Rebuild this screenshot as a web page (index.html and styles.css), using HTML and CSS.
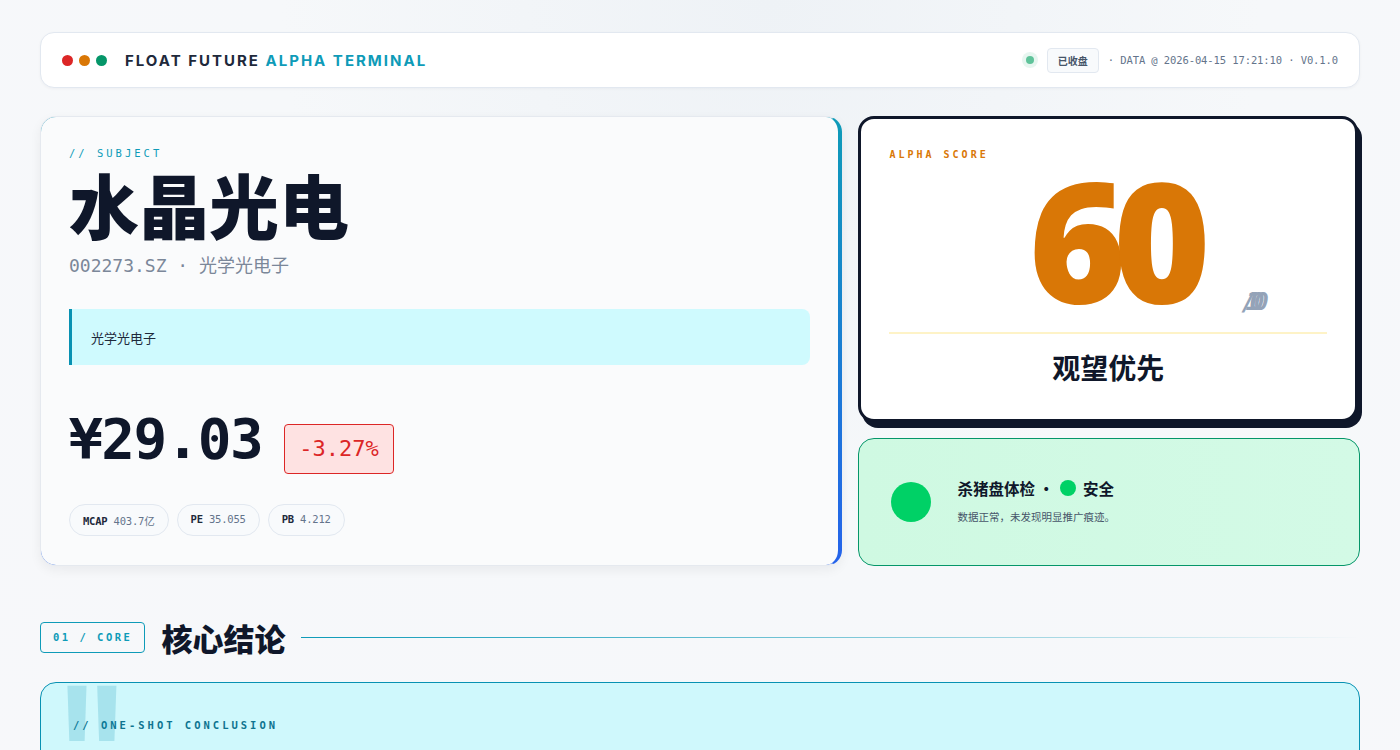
FILE: index.html
```html
<!DOCTYPE html>
<html lang="zh-CN">
<head>
  <meta charset="UTF-8">
  <meta name="viewport" content="width=device-width, initial-scale=1.0">
  <title>Float Future Alpha Terminal</title>
  <link rel="stylesheet" href="styles.css">
</head>
<body>
  <div class="page">
    <!-- Top bar -->
    <header class="topbar">
      <div class="brand">
        <span class="dot red"></span>
        <span class="dot amber"></span>
        <span class="dot green"></span>
        <span class="brand-name">FLOAT FUTURE <em>ALPHA TERMINAL</em></span>
      </div>
      <div class="status">
        <span class="live-dot"></span>
        <span class="market-tag">已收盘</span>
        <span class="meta">· DATA @ 2026-04-15 17:21:10 · V0.1.0</span>
      </div>
    </header>

    <!-- Hero -->
    <section class="hero">
      <div class="subject-card">
        <div class="eyebrow">// SUBJECT</div>
        <h1 class="stock-name">水晶光电</h1>
        <div class="stock-code">002273.SZ · 光学光电子</div>
        <div class="industry-note">光学光电子</div>
        <div class="price-row">
          <span class="price">¥29.03</span>
          <span class="change down">-3.27%</span>
        </div>
        <div class="pills">
          <span class="pill"><b>MCAP</b> 403.7亿</span>
          <span class="pill"><b>PE</b> 35.055</span>
          <span class="pill"><b>PB</b> 4.212</span>
        </div>
      </div>

      <div class="side">
        <div class="score-card">
          <div class="score-label">ALPHA SCORE</div>
          <div class="score-wrap">
            <span class="score">60<span class="score-max">/100</span></span>
          </div>
          <div class="score-verdict">观望优先</div>
        </div>

        <div class="safety-card">
          <span class="safety-light"></span>
          <div class="safety-text">
            <div class="safety-title">杀猪盘体检 ·<span class="mini-light"></span>安全</div>
            <div class="safety-desc">数据正常，未发现明显推广痕迹。</div>
          </div>
        </div>
      </div>
    </section>

    <!-- Section: core -->
    <div class="section-head">
      <span class="section-tag">01 / CORE</span>
      <h2>核心结论</h2>
      <span class="section-line"></span>
    </div>

    <div class="conclusion-card">
      <span class="quote-mark">"</span>
      <div class="eyebrow dark">// ONE-SHOT CONCLUSION</div>
    </div>
  </div>
</body>
</html>
```

FILE: styles.css
```css
/* Reset */
* {
  margin: 0;
  padding: 0;
  box-sizing: border-box;
}

body {
  font-family: Inter, "Noto Sans CJK SC", sans-serif;
  background: radial-gradient(ellipse at 55% 0%, #eef2f6 0%, #f6f8fa 45%, #f7f8fa 100%);
  color: #0f172a;
  min-height: 100vh;
}

.page {
  padding: 32px 40px;
}

/* Top bar */
.topbar {
  display: flex;
  justify-content: space-between;
  align-items: center;
  height: 56px;
  padding: 0 21px;
  background: #fff;
  border: 1px solid #e2e8f0;
  border-radius: 14px;
  box-shadow: 0 1px 3px rgba(15, 23, 42, 0.04);
}

.brand {
  display: flex;
  align-items: center;
  gap: 6px;
}

.dot {
  width: 11px;
  height: 11px;
  border-radius: 50%;
}

.dot.red { background: #dc2626; }
.dot.amber { background: #d97706; }
.dot.green { background: #059669; }

.brand-name {
  margin-left: 12px;
  font-size: 15px;
  font-weight: 700;
  letter-spacing: 2px;
  color: #1e293b;
}

.brand-name em {
  font-style: normal;
  color: #0e9bb8;
}

.status {
  display: flex;
  align-items: center;
  gap: 9px;
  font-family: "DejaVu Sans Mono", "Noto Sans CJK SC", monospace;
}

.live-dot {
  width: 8px;
  height: 8px;
  border-radius: 50%;
  background: #5fc39a;
  box-shadow: 0 0 0 4px rgba(95, 195, 154, 0.15);
  margin-right: 4px;
}

.market-tag {
  font-family: "Noto Sans CJK SC", sans-serif;
  font-size: 10px;
  font-weight: 700;
  color: #475569;
  background: #f8fafc;
  border: 1px solid #e2e8f0;
  border-radius: 4px;
  padding: 4px 10px;
}

.meta {
  font-size: 10.5px;
  color: #64748b;
  letter-spacing: -0.1px;
}

/* Hero grid */
.hero {
  display: grid;
  grid-template-columns: 1.6fr 1fr;
  gap: 16px;
  margin-top: 28px;
}

.subject-card {
  border: 1px solid #e5e9ef;
  border-right: 4px solid transparent;
  border-radius: 16px;
  padding: 30px 28px 29px 28px;
  box-shadow: 0 4px 12px rgba(15, 23, 42, 0.06);
  background-image: linear-gradient(#fafbfc, #fafbfc), linear-gradient(180deg, #0e9bb8, #2563eb);
  background-origin: border-box;
  background-clip: padding-box, border-box;
}

.eyebrow {
  font-family: "DejaVu Sans Mono", monospace;
  font-size: 10.5px;
  letter-spacing: 3px;
  color: #0e9bb8;
}

.eyebrow.dark {
  color: #0e7490;
  font-weight: 700;
}

.stock-name {
  font-family: "Noto Sans CJK SC", sans-serif;
  font-size: 70px;
  font-weight: 900;
  line-height: 1;
  margin-top: 10px;
  color: #0f172a;
}

.stock-code {
  font-family: "DejaVu Sans Mono", "Noto Sans CJK SC", monospace;
  font-size: 18px;
  color: #7b8799;
  margin-top: 12px;
}

.industry-note {
  font-family: "Noto Sans CJK SC", sans-serif;
  margin-top: 32px;
  height: 56px;
  display: flex;
  align-items: center;
  padding-left: 19px;
  font-size: 13px;
  color: #1e293b;
  background: #cffafe;
  border-left: 3px solid #0891b2;
  border-radius: 0 8px 8px 0;
}

.price-row {
  display: flex;
  align-items: center;
  gap: 22px;
  margin-top: 39px;
}

.price {
  font-family: "DejaVu Sans Mono", monospace;
  font-size: 56px;
  font-weight: 700;
  letter-spacing: -1.5px;
  color: #0f172a;
  line-height: 1;
}

.change {
  font-family: "DejaVu Sans Mono", monospace;
  font-size: 22px;
  line-height: 1;
  padding: 13px 14px;
  border-radius: 4px;
  margin-top: 20px;
}

.change.down {
  color: #dc2626;
  background: #fee2e2;
  border: 1px solid #dc2626;
}

.pills {
  display: flex;
  gap: 8px;
  margin-top: 30px;
}

.pill {
  font-family: "DejaVu Sans Mono", "Noto Sans CJK SC", monospace;
  font-size: 10.5px;
  letter-spacing: -0.2px;
  color: #64748b;
  background: #f8fafc;
  border: 1px solid #e2e8f0;
  border-radius: 16px;
  padding: 8px 13px 7px;
}

.pill b {
  color: #1e293b;
}

/* Right column */
.side {
  display: flex;
  flex-direction: column;
  gap: 16px;
}

.score-card {
  background: #fff;
  border: 3px solid #0f172a;
  border-radius: 16px;
  box-shadow: 4px 6px 0 #0f172a;
  padding: 30px 28px 32px 28px;
  margin-right: 2px;
}

.score-label {
  font-family: "DejaVu Sans Mono", monospace;
  font-size: 10px;
  font-weight: 700;
  letter-spacing: 3px;
  color: #d97706;
}

.score-wrap {
  display: flex;
  justify-content: center;
  border-bottom: 2px solid #fef3c7;
  padding-bottom: 13px;
}

.score {
  position: relative;
  font-family: "Noto Sans", sans-serif;
  font-size: 166px;
  font-weight: 900;
  line-height: 0.96;
  letter-spacing: -13px;
  color: #d97706;
  padding-left: 10px;
}

.score-max {
  position: absolute;
  left: 100%;
  bottom: 5px;
  margin-left: 44px;
  font-family: "DejaVu Sans Mono", monospace;
  font-size: 25px;
  font-weight: 700;
  font-style: italic;
  letter-spacing: -11px;
  color: #94a3b8;
  line-height: 1;
}

.score-verdict {
  font-family: "Noto Sans CJK SC", sans-serif;
  text-align: center;
  font-size: 28px;
  font-weight: 700;
  margin-top: 13px;
  color: #0f172a;
}

.safety-card {
  flex: 1;
  display: flex;
  align-items: center;
  gap: 26px;
  padding: 0 32px;
  background: linear-gradient(90deg, #cff9e2, #d3fae6);
  border: 1px solid #059669;
  border-radius: 16px;
}

.safety-light {
  width: 40px;
  height: 40px;
  border-radius: 50%;
  background: #00d166;
  flex-shrink: 0;
}

.safety-text {
  font-family: "Noto Sans CJK SC", sans-serif;
  margin-top: -4px;
}

.safety-title {
  display: flex;
  align-items: center;
  font-size: 15.5px;
  font-weight: 700;
  color: #0f172a;
}

.mini-light {
  width: 16px;
  height: 16px;
  border-radius: 50%;
  background: #00d166;
  margin: 0 7px 0 6px;
}

.safety-desc {
  font-size: 10.5px;
  color: #475569;
  margin-top: 10px;
}

/* Section heading */
.section-head {
  display: flex;
  align-items: center;
  gap: 16px;
  margin-top: 56px;
}

.section-tag {
  font-family: "DejaVu Sans Mono", monospace;
  font-size: 10.5px;
  font-weight: 700;
  letter-spacing: 2.5px;
  color: #0e9bb8;
  border: 1px solid #0e9bb8;
  border-radius: 4px;
  padding: 8px 12px 9px;
}

.section-head h2 {
  font-family: "Noto Sans CJK SC", sans-serif;
  font-size: 31px;
  font-weight: 900;
  color: #0f172a;
  line-height: 1;
}

.section-line {
  flex: 1;
  height: 1px;
  background: linear-gradient(90deg, #0e9bb8, rgba(14, 155, 184, 0.35) 70%, rgba(14, 155, 184, 0));
}

/* Conclusion */
.conclusion-card {
  position: relative;
  margin-top: 29px;
  height: 120px;
  background: #cff8fc;
  border: 1px solid #0891b2;
  border-radius: 16px;
  padding: 36px 32px;
  overflow: hidden;
}

.quote-mark {
  position: absolute;
  left: 17px;
  top: -31px;
  font-family: "Liberation Sans", sans-serif;
  font-size: 220px;
  font-weight: 700;
  line-height: 1;
  color: rgba(8, 145, 178, 0.2);
  transform: scaleX(0.65);
  transform-origin: left top;
}
```
